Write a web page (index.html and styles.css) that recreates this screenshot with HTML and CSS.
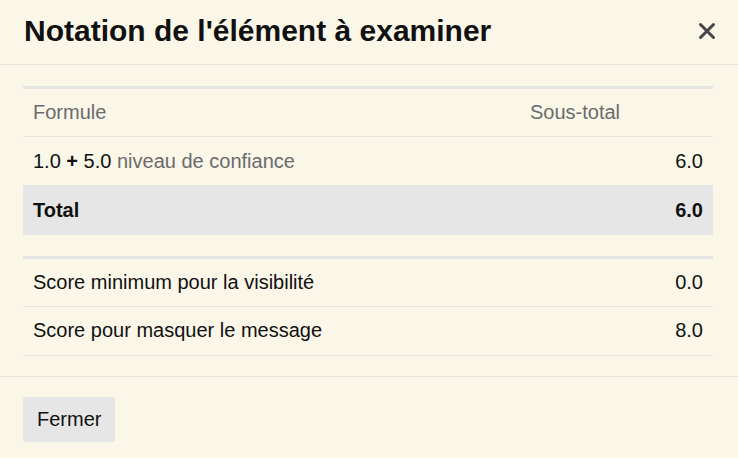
FILE: index.html
```html
<!DOCTYPE html>
<html lang="fr">
<head>
  <meta charset="UTF-8" />
  <meta name="viewport" content="width=device-width, initial-scale=1.0" />
  <title>Notation de l'élément à examiner</title>
  <link rel="stylesheet" href="styles.css">
</head>
<body>
  <div class="modal">
    <div class="modal-header">
      <h2 class="modal-title">Notation de l'élément à examiner</h2>
      <button class="close" aria-label="Fermer">
        <svg width="18" height="18" viewBox="0 0 18 18">
          <path d="M2.5 2.5 L15.5 15.5 M15.5 2.5 L2.5 15.5" stroke="#444" stroke-width="3" stroke-linecap="round" />
        </svg>
      </button>
    </div>

    <div class="modal-body">
      <table class="score-table">
        <thead>
          <tr>
            <th>Formule</th>
            <th class="subtotal">Sous-total</th>
          </tr>
        </thead>
        <tbody>
          <tr>
            <td>1.0 <b>+</b> 5.0 <span class="muted">niveau de confiance</span></td>
            <td class="num">6.0</td>
          </tr>
          <tr class="total">
            <td>Total</td>
            <td class="num">6.0</td>
          </tr>
        </tbody>
      </table>

      <table class="score-table thresholds">
        <tbody>
          <tr>
            <td>Score minimum pour la visibilité</td>
            <td class="num">0.0</td>
          </tr>
          <tr>
            <td>Score pour masquer le message</td>
            <td class="num">8.0</td>
          </tr>
        </tbody>
      </table>
    </div>

    <div class="modal-footer">
      <button class="btn">Fermer</button>
    </div>
  </div>
</body>
</html>
```

FILE: styles.css
```css
* {
  box-sizing: border-box;
}

body {
  margin: 0;
  padding: 0;
  background: #faf6e8;
  font-family: 'Liberation Sans', Arial, sans-serif;
  color: #111;
}

.modal {
  width: 738px;
  height: 458px;
  background: #faf6e8;
}

.modal-header {
  display: flex;
  justify-content: space-between;
  align-items: center;
  height: 65px;
  padding: 0 21px 2px 24px;
  border-bottom: 1px solid #e6e4dc;
}

.modal-title {
  margin: 0;
  font-size: 30px;
  font-weight: bold;
  color: #111;
}

.close {
  background: none;
  border: none;
  padding: 0;
  width: 20px;
  height: 20px;
  display: flex;
  align-items: center;
  justify-content: center;
  cursor: pointer;
}

.modal-body {
  padding: 21px 25px 20px 23px;
}

.score-table {
  width: 100%;
  border-collapse: collapse;
  border-top: 3px solid #e5e5e3;
  font-size: 20px;
}

.score-table + .score-table {
  margin-top: 21px;
}

.score-table th,
.score-table td {
  height: 49px;
  padding: 0 10px;
  text-align: left;
  vertical-align: middle;
  border-bottom: 1px solid #e7e5dd;
}

.score-table th {
  font-weight: normal;
  color: #6b6b6b;
}

.score-table th.subtotal {
  width: 193px;
}

.muted {
  color: #6b6b6b;
}

.num {
  text-align: right !important;
}

.total td {
  background: #e6e6e6;
  font-weight: bold;
  border-bottom: none;
}

.modal-footer {
  border-top: 1px solid #e6e4dc;
  padding: 20px 23px;
}

.btn {
  font-family: 'Liberation Sans', Arial, sans-serif;
  font-size: 20px;
  color: #111;
  background: #e6e6e6;
  border: none;
  border-radius: 2px;
  height: 45px;
  padding: 0 14px;
  cursor: pointer;
}
```
